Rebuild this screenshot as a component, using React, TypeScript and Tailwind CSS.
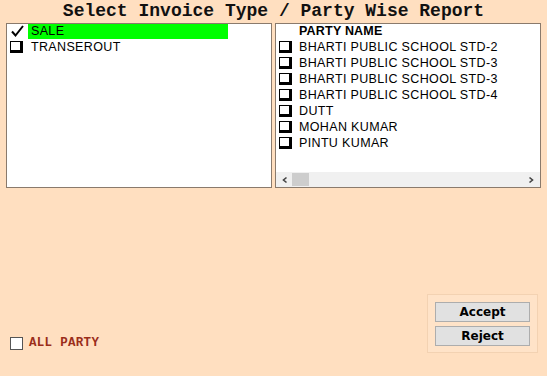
import { useState } from 'react';

const parties = [
  'BHARTI PUBLIC SCHOOL STD-2',
  'BHARTI PUBLIC SCHOOL STD-3',
  'BHARTI PUBLIC SCHOOL STD-3',
  'BHARTI PUBLIC SCHOOL STD-4',
  'DUTT',
  'MOHAN KUMAR',
  'PINTU KUMAR',
];

function Box3d() {
  return (
    <span className="w-[13px] h-[12px] shrink-0 border border-black border-r-[3px] border-b-[3px] bg-white" />
  );
}

const itemText = 'text-[12.5px] leading-[15px] text-black tracking-[0.35px]';

export default function App() {
  const [allParty, setAllParty] = useState(false);

  return (
    <div className="w-[547px] h-[376px] bg-[#ffdfc0] flex flex-col overflow-hidden" style={{ fontFamily: '"Liberation Sans", Arial, sans-serif' }}>
      <h1 className="h-[23px] pt-[1px] text-center text-[18px] font-bold leading-[20px] text-[#111]" style={{ fontFamily: '"Liberation Mono", "Courier New", monospace' }}>
        Select Invoice Type / Party Wise Report
      </h1>

      <div className="flex gap-[3px] pl-[6px]">
        {/* invoice types */}
        <div className="w-[266px] h-[165px] bg-white border border-[#8a7a6c]">
          <div className="flex items-center h-[16px] pl-[3px] -mt-[1px]">
            <svg width="18" height="14" viewBox="0 0 18 14" className="shrink-0">
              <path d="M2 7.5 L5.5 11.5 L13 2" fill="none" stroke="#000" strokeWidth="2" />
            </svg>
            <span className={`w-[200px] h-[15px] bg-[#00ff00] pl-[3px] ${itemText}`}>SALE</span>
          </div>
          <div className="flex items-center h-[16px] pl-[3px] gap-[8px]">
            <Box3d />
            <span className={itemText}>TRANSEROUT</span>
          </div>
        </div>

        {/* parties */}
        <div className="w-[266px] h-[165px] bg-white border border-[#8a7a6c] flex flex-col">
          <div className="flex-1 -mt-[1px]">
            <div className="h-[16px] pl-[23px] text-[12.5px] font-bold leading-[16px] text-black tracking-[0.2px]">PARTY NAME</div>
            {parties.map((p, i) => (
              <div key={i} className="flex items-center h-[16px] pl-[3px] gap-[7px]">
                <Box3d />
                <span className={itemText}>{p}</span>
              </div>
            ))}
          </div>
          <div className="h-[15px] bg-[#f0f0f0] flex items-center pl-[5px] pr-[5px] gap-[3px]">
            <svg width="8" height="8" viewBox="0 0 8 8"><path d="M5.5 1.5 L2.5 4 L5.5 6.5" fill="none" stroke="#444" strokeWidth="1.6" /></svg>
            <span className="w-[17px] h-[13px] bg-[#cdcdcd]" />
            <span className="flex-1" />
            <svg width="8" height="8" viewBox="0 0 8 8"><path d="M2.5 1.5 L5.5 4 L2.5 6.5" fill="none" stroke="#444" strokeWidth="1.6" /></svg>
          </div>
        </div>
      </div>

      <div className="flex-1 flex items-end justify-between pl-[10px] pr-[9px] pb-[23px]">
        <label className="flex items-center gap-[6px] mb-[3px]" onClick={() => setAllParty(!allParty)}>
          <span className="w-[13px] h-[13px] border border-[#555] bg-white" />
          <span className="text-[12.5px] font-bold leading-none text-[#9a2d1a] tracking-[0.3px]" style={{ fontFamily: '"Liberation Mono", "Courier New", monospace' }}>
            ALL PARTY
          </span>
        </label>

        <div className="w-[111px] h-[59px] border border-[#f3d2b2] bg-[#ffe3c8] flex flex-col items-center justify-center gap-[4px]">
          <button className="w-[95px] h-[20px] bg-[#e1e1e1] border border-[#adadad] text-[12px] font-bold text-black leading-none" style={{ fontFamily: 'Tahoma, "DejaVu Sans", sans-serif' }}>
            Accept
          </button>
          <button className="w-[95px] h-[20px] bg-[#e1e1e1] border border-[#adadad] text-[12px] font-bold text-black leading-none" style={{ fontFamily: 'Tahoma, "DejaVu Sans", sans-serif' }}>
            Reject
          </button>
        </div>
      </div>
    </div>
  );
}
